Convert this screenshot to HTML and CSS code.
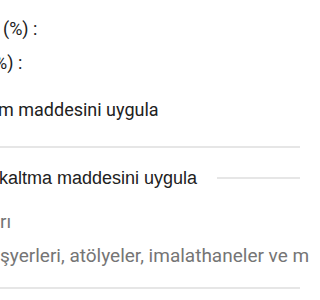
FILE: index.html
```html
<!DOCTYPE html>
<html lang="tr">
<head>
<meta charset="utf-8">
<link rel="stylesheet" href="styles.css">
</head>
<body>
<div class="form">
  <div class="field field-first">(%) :</div>
  <div class="field field-second">%) :</div>
  <div class="check">m maddesini uygula</div>
  <div class="divider divider-top"></div>
  <div class="legend"><span class="legend-text">kaltma maddesini uygula</span><span class="legend-rule"></span></div>
  <div class="sub sub-first">rı</div>
  <div class="sub sub-second">şyerleri, atölyeler, imalathaneler ve m</div>
  <div class="divider divider-bottom"></div>
</div>
</body>
</html>
```
FILE: styles.css
```css
html, body {
  margin: 0;
  padding: 0;
  background: #ffffff;
  overflow: hidden;
}
.form {
  width: 300px;
  font-family: Roboto, "Noto Sans", sans-serif;
  color: #212121;
  display: flex;
  flex-direction: column;
}
.field {
  font-size: 18px;
  line-height: 20px;
  white-space: nowrap;
}
.field-first {
  margin-top: 19px;
  padding-left: 3px;
}
.field-second {
  margin-top: 14px;
  text-indent: -6px;
}
.check {
  margin-top: 27px;
  font-size: 18px;
  line-height: 20px;
  white-space: nowrap;
  text-indent: -2px;
}
.divider {
  height: 2px;
  background: #e6e6e6;
}
.divider-top {
  margin-top: 26px;
}
.legend {
  margin-top: 20px;
  display: flex;
  align-items: center;
  gap: 20px;
  font-family: "Liberation Sans", Arial, sans-serif;
  font-size: 18px;
  line-height: 20px;
  white-space: nowrap;
  margin-left: -1px;
}
.legend-rule {
  flex: 1;
  height: 2px;
  background: #e6e6e6;
}
.sub {
  font-size: 19px;
  line-height: 20px;
  color: #757575;
  white-space: nowrap;
}
.sub-first {
  margin-top: 24px;
}
.sub-second {
  margin-top: 14px;
}
.divider-bottom {
  margin-top: 21px;
}
```
